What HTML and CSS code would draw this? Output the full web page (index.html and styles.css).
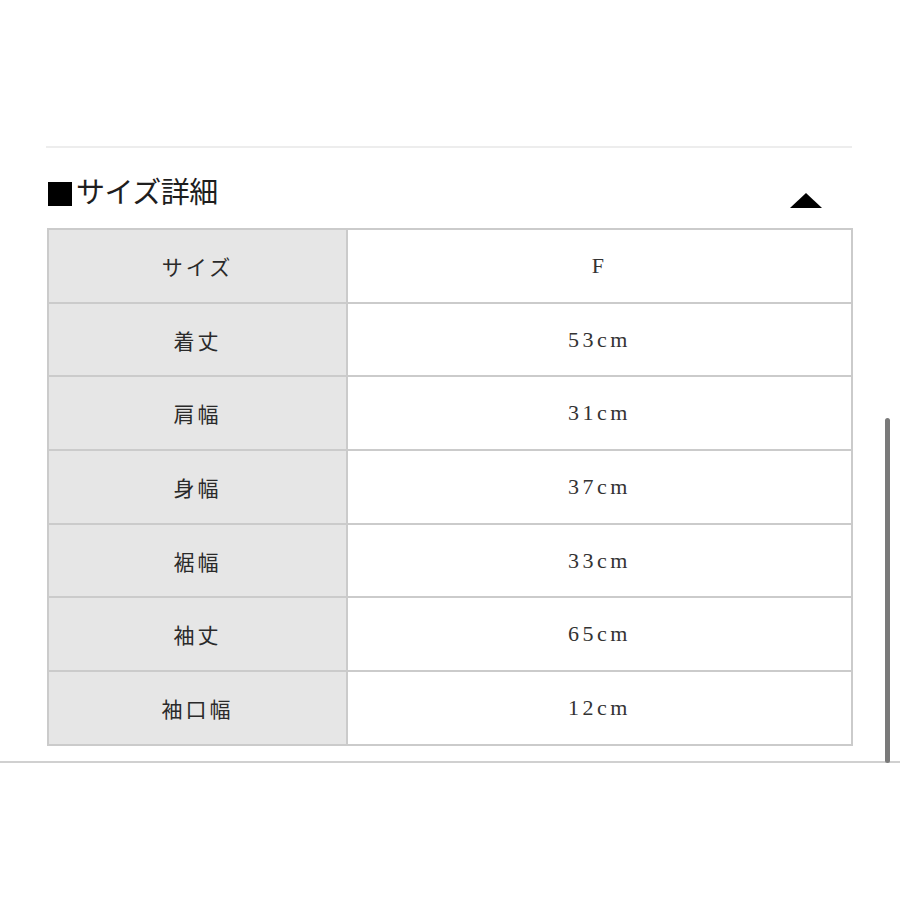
FILE: index.html
```html
<!DOCTYPE html>
<html lang="ja">
<head>
<meta charset="utf-8">
<link rel="stylesheet" href="styles.css">
</head>
<body>
<div class="page">
  <div class="content">
    <div class="top-rule"></div>
    <div class="heading">
      <h2 class="title"><span class="square"></span>サイズ詳細</h2>
      <span class="toggle"></span>
    </div>
    <table class="size-table">
      <tr><th>サイズ</th><td>F</td></tr>
      <tr><th>着丈</th><td>53cm</td></tr>
      <tr><th>肩幅</th><td>31cm</td></tr>
      <tr><th>身幅</th><td>37cm</td></tr>
      <tr><th>裾幅</th><td>33cm</td></tr>
      <tr><th>袖丈</th><td>65cm</td></tr>
      <tr><th>袖口幅</th><td>12cm</td></tr>
    </table>
  </div>
  <div class="bottom-rule"></div>
  <div class="scrollbar"></div>
</div>
</body>
</html>
```
FILE: styles.css
```css
html, body {
  margin: 0;
  padding: 0;
  background: #ffffff;
}
.page {
  position: relative;
  width: 900px;
  height: 900px;
  font-family: "Liberation Serif", "Noto Sans CJK JP", serif;
  color: #333;
}
.content {
  padding: 146px 48px 0 46px;
}
.top-rule {
  height: 2px;
  background: #ededed;
}
.heading {
  display: flex;
  justify-content: space-between;
  align-items: flex-end;
  height: 80px;
  box-sizing: border-box;
  padding: 0 30px 18px 2px;
}
.title {
  display: flex;
  align-items: center;
  margin: 0 0 2px 0;
  font-size: 29px;
  font-weight: normal;
  color: #1e1e1e;
  line-height: 1;
  letter-spacing: -0.5px;
}
.square {
  width: 24px;
  height: 24px;
  background: #000;
  margin-right: 4px;
}
.toggle {
  width: 0;
  height: 0;
  border-left: 16px solid transparent;
  border-right: 16px solid transparent;
  border-bottom: 15px solid #000;
  margin-bottom: 2px;
}
.size-table {
  width: 806px;
  margin-left: 1px;
  border-collapse: collapse;
  border: 2px solid #c9c9c9;
}
.size-table th,
.size-table td {
  height: 71.7px;
  padding: 0;
  border: 2px solid #cbcbcb;
  text-align: center;
  font-weight: normal;
  color: #333;
}
.size-table th {
  width: 297px;
  background: #e6e6e6;
  color: #2a2a2a;
  font-size: 21px;
  letter-spacing: 3px;
}
.size-table td {
  background: #fff;
  font-size: 22px;
  letter-spacing: 3.5px;
}
.bottom-rule {
  margin-top: 15px;
  height: 2px;
  background: #d0d0d0;
}
.scrollbar {
  position: absolute;
  left: 885px;
  top: 418px;
  width: 5px;
  height: 345px;
  border-radius: 3px;
  background: #7a7a7a;
}
```
